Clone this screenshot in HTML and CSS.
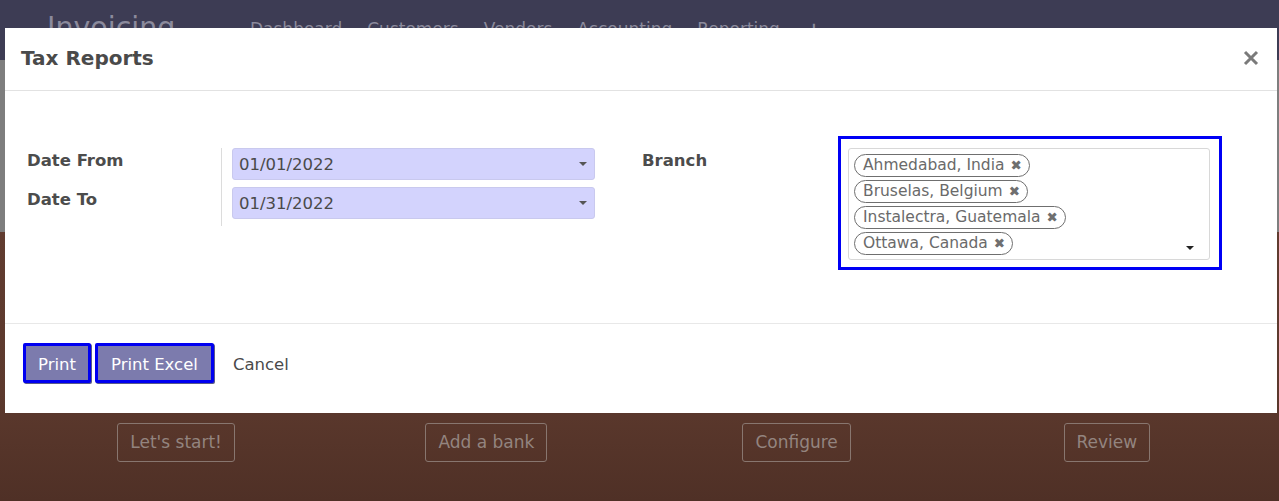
FILE: index.html
```html
<!DOCTYPE html>
<html lang="en">
<head>
<meta charset="utf-8">
<title>Tax Reports</title>
<link rel="stylesheet" href="styles.css">
</head>
<body>
<div class="app">
  <header class="navbar">
    <span class="brand">Invoicing</span>
    <nav class="menu">
      <span>Dashboard</span>
      <span>Customers</span>
      <span>Vendors</span>
      <span>Accounting</span>
      <span>Reporting</span>
      <span class="plus">+</span>
    </nav>
  </header>
  <div class="control-panel"></div>
  <main class="dashboard">
    <div class="steps">
      <div class="step"><span class="ghost-btn">Let's start!</span></div>
      <div class="step"><span class="ghost-btn">Add a bank</span></div>
      <div class="step"><span class="ghost-btn">Configure</span></div>
      <div class="step"><span class="ghost-btn">Review</span></div>
    </div>
  </main>
</div>

<div class="modal">
  <div class="modal-header">
    <h4 class="modal-title">Tax Reports</h4>
    <svg class="close" width="16" height="16" viewBox="0 0 16 16"><path d="M2 2 L14 14 M14 2 L2 14" stroke="#7a7a7a" stroke-width="3" stroke-linecap="butt"/></svg>
  </div>
  <div class="modal-body">
    <div class="group left-group">
      <div class="labels">
        <div class="label">Date From</div>
        <div class="label">Date To</div>
      </div>
      <div class="fields">
        <div class="input"><span>01/01/2022</span><span class="caret"></span></div>
        <div class="input"><span>01/31/2022</span><span class="caret"></span></div>
      </div>
    </div>
    <div class="group right-group">
      <div class="label branch-label">Branch</div>
      <div class="focus-box">
        <div class="tags-select">
          <div class="tags">
            <span class="tag">Ahmedabad, India <span class="x">✖</span></span>
            <span class="tag">Bruselas, Belgium <span class="x">✖</span></span>
            <span class="tag">Instalectra, Guatemala <span class="x">✖</span></span>
            <span class="tag">Ottawa, Canada <span class="x">✖</span></span>
          </div>
          <span class="caret tags-caret"></span>
        </div>
      </div>
    </div>
  </div>
  <div class="modal-footer">
    <button class="btn btn-primary">Print</button>
    <button class="btn btn-primary btn-wide">Print Excel</button>
    <button class="btn btn-link">Cancel</button>
  </div>
</div>
</body>
</html>
```

FILE: styles.css
```css
* { box-sizing: border-box; }
html, body {
  margin: 0;
  width: 1279px;
  height: 501px;
  overflow: hidden;
}
body {
  font-family: "DejaVu Sans", sans-serif;
  font-size: 16px;
  position: relative;
  background: #5a382c;
}
.app {
  display: flex;
  flex-direction: column;
  height: 501px;
}
.navbar {
  height: 60px;
  background: #3d3c54;
  display: flex;
  align-items: flex-start;
  color: #8b8a9c;
  padding-left: 47px;
}
.brand {
  font-size: 28.5px;
  line-height: 30px;
  margin-top: 13px;
  width: 203px;
}
.menu {
  display: flex;
  gap: 25px;
  margin-top: 19px;
  font-size: 17px;
}
.menu .plus { font-weight: bold; margin-left: 2px; }
.control-panel {
  height: 172px;
  background: #7e7e7e;
}
.dashboard {
  flex: 1;
  background: linear-gradient(180deg, #613c30 0%, #5c392d 60%, #4f3026 100%);
  padding: 191px 17px 0 21px;
}
.steps {
  display: grid;
  grid-template-columns: repeat(4, 1fr);
}
.step {
  display: flex;
  justify-content: center;
}
.ghost-btn {
  border: 1px solid #88766f;
  border-radius: 3px;
  color: #93847f;
  font-size: 17px;
  height: 39px;
  line-height: 37px;
  padding: 0 12px;
}

.modal {
  position: absolute;
  left: 5px;
  top: 28px;
  width: 1272px;
  height: 385px;
  background: #fff;
  display: flex;
  flex-direction: column;
  color: #4c4c4c;
}
.modal-header {
  height: 63px;
  border-bottom: 1px solid #e2e2e2;
  display: flex;
  align-items: center;
  justify-content: space-between;
  padding: 0 18px 0 16px;
}
.modal-title {
  margin: 0;
  font-size: 20px;
  font-weight: bold;
  color: #4a4a4a;
  margin-top: -3px;
}
.close { margin-top: -3px; }

.modal-body {
  height: 233px;
  border-bottom: 1px solid #e8e8e8;
  padding: 45px 0 0 22px;
  display: flex;
}
.group { display: flex; }
.left-group { width: 615px; padding-top: 12px; }
.labels {
  width: 195px;
  border-right: 1px solid #dcdcdc;
  height: 78px;
}
.label {
  height: 39px;
  line-height: 26px;
  font-weight: bold;
  font-size: 16.5px;
  color: #4c4c4c;
}
.fields {
  padding-left: 10px;
  width: 373px;
}
.input {
  height: 32px;
  margin-bottom: 7px;
  background: #d3d3fd;
  border: 1px solid #c9c9ee;
  border-radius: 3px;
  display: flex;
  align-items: center;
  justify-content: space-between;
  padding: 0 6px 0 6px;
  color: #4a4a4a;
  font-size: 16.5px;
}
.caret {
  width: 0;
  height: 0;
  border-left: 4.5px solid transparent;
  border-right: 4.5px solid transparent;
  border-top: 4.5px solid #555;
  margin-right: 1px;
}
.right-group { padding-top: 12px; }
.branch-label { width: 196px; }
.focus-box {
  margin-top: -12px;
  width: 384px;
  height: 134px;
  border: 3px solid #0000f5;
  padding: 9px 9px 0 7px;
}
.tags-select {
  height: 112px;
  border: 1px solid #d8d8d8;
  border-radius: 3px;
  display: flex;
  justify-content: space-between;
  padding: 5px 14px 0 5px;
}
.tags {
  display: flex;
  flex-direction: column;
  align-items: flex-start;
  gap: 3px;
}
.tag {
  height: 23px;
  border: 1px solid #6f6f6f;
  border-radius: 12px;
  padding: 0 7px 0 8px;
  color: #6a6a6a;
  font-size: 15.5px;
  line-height: 21px;
  white-space: nowrap;
}
.tag .x {
  font-size: 13.5px;
  color: #6f6f6f;
  margin-left: 1px;
}
.tags-caret {
  align-self: flex-end;
  margin-bottom: 9px;
  border-top-color: #222;
}

.modal-footer {
  flex: 1;
  display: flex;
  align-items: flex-start;
  padding: 19px 18px 0 18px;
  gap: 4px;
}
.btn {
  font-family: "DejaVu Sans", sans-serif;
  font-size: 16.5px;
  height: 40px;
  border-radius: 2px;
  cursor: pointer;
  padding-top: 3px;
}
.btn-primary {
  background: #7c7bad;
  color: #fff;
  border: 3px solid #0000f0;
  padding-left: 12px;
  padding-right: 12px;
  box-shadow: 1px 1px 0 #5a5a8a;
}
.btn-wide {
  padding-left: 13px;
  padding-right: 13px;
}
.btn-link {
  background: none;
  border: none;
  color: #4a4a4a;
  padding-left: 15px;
  padding-right: 16px;
}
```
